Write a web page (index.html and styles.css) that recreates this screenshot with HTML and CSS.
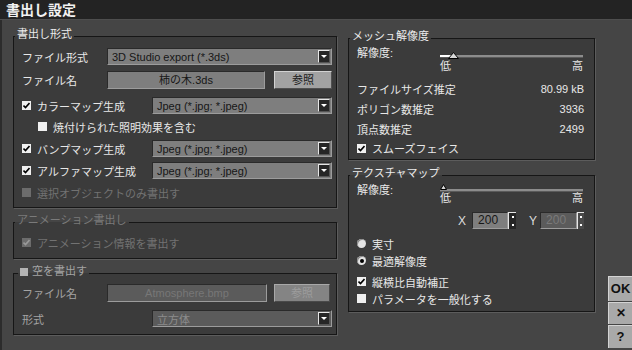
FILE: index.html
```html
<!DOCTYPE html>
<html lang="ja">
<head>
    <meta charset="UTF-8">
    <title>書出し設定</title>
    <link rel="stylesheet" href="styles.css">
</head>
<body>
<div class="window">
    <div class="titlebar">書出し設定</div>
    <div class="main">
        <!-- 左側 -->
        <div class="col-left">
            <fieldset class="group g-format">
                <legend>書出し形式</legend>
                <div class="row r1">
                    <span class="label">ファイル形式</span>
                    <div class="select wide"><span>3D Studio export (*.3ds)</span><i class="arrow"></i></div>
                </div>
                <div class="row r2">
                    <span class="label">ファイル名</span>
                    <div class="field">柿の木.3ds</div>
                    <div class="btn">参照</div>
                </div>
                <div class="row r3">
                    <span class="check"><i class="box on"><svg width="7" height="7" viewBox="0 0 7 7"><polyline points="0.5,3.5 2.5,5.5 6.5,1" fill="none" stroke="#000" stroke-width="1.6"/></svg></i>カラーマップ生成</span>
                    <div class="select short"><span>Jpeg (*.jpg; *.jpeg)</span><i class="arrow"></i></div>
                </div>
                <div class="row r4">
                    <span class="check sub"><i class="box"></i>焼付けられた照明効果を含む</span>
                </div>
                <div class="row">
                    <span class="check"><i class="box on"><svg width="7" height="7" viewBox="0 0 7 7"><polyline points="0.5,3.5 2.5,5.5 6.5,1" fill="none" stroke="#000" stroke-width="1.6"/></svg></i>バンプマップ生成</span>
                    <div class="select short"><span>Jpeg (*.jpg; *.jpeg)</span><i class="arrow"></i></div>
                </div>
                <div class="row">
                    <span class="check"><i class="box on"><svg width="7" height="7" viewBox="0 0 7 7"><polyline points="0.5,3.5 2.5,5.5 6.5,1" fill="none" stroke="#000" stroke-width="1.6"/></svg></i>アルファマップ生成</span>
                    <div class="select short"><span>Jpeg (*.jpg; *.jpeg)</span><i class="arrow"></i></div>
                </div>
                <div class="row">
                    <span class="check dis"><i class="box"></i>選択オブジェクトのみ書出す</span>
                </div>
            </fieldset>

            <fieldset class="group g-anim dis">
                <legend>アニメーション書出し</legend>
                <div class="row">
                    <span class="check dis"><i class="box"><svg width="7" height="7" viewBox="0 0 7 7"><polyline points="0.5,3.5 2.5,5.5 6.5,1" fill="none" stroke="#9a9a9a" stroke-width="1.6"/></svg></i>アニメーション情報を書出す</span>
                </div>
            </fieldset>

            <fieldset class="group g-sky">
                <legend><span class="check dim"><i class="box"></i>空を書出す</span></legend>
                <div class="row">
                    <span class="label dim">ファイル名</span>
                    <div class="field off">Atmosphere.bmp</div>
                    <div class="btn off">参照</div>
                </div>
                <div class="row r-form">
                    <span class="label dim">形式</span>
                    <div class="select short off"><span>立方体</span><i class="arrow"></i></div>
                </div>
            </fieldset>
        </div>

        <!-- 右側 -->
        <div class="col-right">
            <fieldset class="group g-mesh">
                <legend>メッシュ解像度</legend>
                <div class="slider-row">
                    <span class="s-label">解像度:</span>
                    <div class="slider">
                        <div class="track"><i class="fill"></i>
                            <svg class="thumb" width="11" height="7" viewBox="0 0 11 7"><polygon points="5.5,0.5 10.5,6.5 0.5,6.5" fill="#d8d8d8" stroke="#000" stroke-width="1"/></svg>
                        </div>
                        <div class="ends"><span>低</span><span>高</span></div>
                    </div>
                </div>
                <div class="info first"><span>ファイルサイズ推定</span><span>80.99 kB</span></div>
                <div class="info"><span>ポリゴン数推定</span><span>3936</span></div>
                <div class="info"><span>頂点数推定</span><span>2499</span></div>
                <div class="row r-smooth">
                    <span class="check"><i class="box on"><svg width="7" height="7" viewBox="0 0 7 7"><polyline points="0.5,3.5 2.5,5.5 6.5,1" fill="none" stroke="#000" stroke-width="1.6"/></svg></i>スムーズフェイス</span>
                </div>
            </fieldset>

            <fieldset class="group g-tex">
                <legend>テクスチャマップ</legend>
                <div class="slider-row tex">
                    <span class="s-label">解像度:</span>
                    <div class="slider">
                        <div class="track">
                            <svg class="thumb" width="7" height="6" viewBox="0 0 7 6"><polygon points="3.5,0.5 6.5,5.5 0.5,5.5" fill="#d8d8d8" stroke="#000" stroke-width="1"/></svg>
                        </div>
                        <div class="ends"><span>低</span><span>高</span></div>
                    </div>
                </div>
                <div class="xy">
                    <span class="xy-label">X</span>
                    <div class="num">200</div>
                    <div class="spin"><i></i><i></i></div>
                    <span class="xy-label y">Y</span>
                    <div class="num off">200</div>
                    <div class="spin off"><i></i><i></i></div>
                </div>
                <div class="row r-radio">
                    <span class="radio"><i class="dot"></i>実寸</span>
                </div>
                <div class="row">
                    <span class="radio"><i class="dot sel"></i>最適解像度</span>
                </div>
                <div class="row r-aspect">
                    <span class="check"><i class="box on"><svg width="7" height="7" viewBox="0 0 7 7"><polyline points="0.5,3.5 2.5,5.5 6.5,1" fill="none" stroke="#000" stroke-width="1.6"/></svg></i>縦横比自動補正</span>
                </div>
                <div class="row">
                    <span class="check"><i class="box"></i>パラメータを一般化する</span>
                </div>
            </fieldset>
        </div>

        <!-- OK / キャンセル / ヘルプ -->
        <div class="side">
            <div class="side-btn ok">OK</div>
            <div class="side-btn cancel">✕</div>
            <div class="side-btn help">?</div>
        </div>
    </div>
</div>
</body>
</html>
```

FILE: styles.css
```css
*{
    box-sizing: border-box;
}
body{
    margin: 0;
    background: #444;
    font-family: "Liberation Sans", "Noto Sans CJK JP", sans-serif;
    font-size: 11px;
    color: #e8e8e8;
}
.window{
    width: 632px;
    height: 350px;
    overflow: hidden;
    background: #454545;
    box-shadow: inset 2px 0 0 #2c2c2c;
}
/* タイトルバー */
.titlebar{
    height: 20px;
    padding-left: 6px;
    background: #232323;
    border-bottom: 1px solid #4e4e4e;
    font-family: "Noto Sans CJK JP", sans-serif;
    font-size: 14px;
    font-weight: bold;
    line-height: 19px;
    color: #f2f2f2;
}
.main{
    display: flex;
    height: 330px;
    padding: 8px 0 0 13px;
}
.col-left{
    width: 324px;
    display: flex;
    flex-direction: column;
}
.col-right{
    width: 248px;
    margin-left: 11px;
    padding-top: 2px;
}
/* グループ枠 */
.group{
    margin: 0;
    padding: 0 4px 6px 8px;
    border: 1px solid #161616;
    background: #3b3b3b;
    box-shadow: 1px 1px 0 #5c5c5c;
}
.group legend{
    margin-left: -7px;
    padding: 0 2px 4px;
    line-height: 13px;
    color: #ececec;
}
.g-anim{
    margin-top: 6px;
    padding-bottom: 7px;
}
.g-anim legend{
    color: #7a7a7a;
}
.g-anim .row{
    margin-top: 3px;
}
.g-sky{
    margin-top: 6px;
    padding-bottom: 7px;
}
.g-sky legend{
    margin-left: -4px;
}
.g-sky .row{
    height: 18px;
    margin-top: 2px;
}
.g-sky .r-form{
    height: 17px;
    margin-top: 8px;
}
/* 行 */
.row{
    display: flex;
    align-items: center;
    height: 17px;
    margin-top: 5px;
}
.g-format .r1{
    margin-top: 3px;
}
.g-format .r2{
    height: 18px;
    margin-top: 6px;
}
.g-format .r3{
    margin-top: 8px;
}
.g-format .r4{
    margin-top: 4px;
}
.label{
    width: 85px;
    flex-shrink: 0;
}
.dim{
    color: #a4a4a4;
}
/* ドロップダウン */
.select{
    display: flex;
    align-items: center;
    height: 17px;
    padding-left: 4px;
    background: #7e7e7e;
    border: 1px solid;
    border-color: #2a2a2a #9c9c9c #9c9c9c #2a2a2a;
    color: #161616;
}
.select span{
    flex: 1;
}
.wide{
    width: 225px;
}
.short{
    width: 180px;
    margin-left: auto;
}
.arrow{
    width: 12px;
    height: 13px;
    margin-right: 1px;
    background: #262626;
    border: 1px solid;
    border-color: #e6e6e6 #555 #555 #e6e6e6;
    display: flex;
    align-items: center;
    justify-content: center;
}
.arrow::after{
    content: "";
    border-top: 3px solid #fff;
    border-left: 3px solid transparent;
    border-right: 3px solid transparent;
}
.select.off{
    background: #5b5b5b;
    color: #8c8c8c;
}
/* 入力欄とボタン */
.field{
    width: 158px;
    height: 18px;
    background: #7e7e7e;
    border: 1px solid;
    border-color: #2a2a2a #9c9c9c #9c9c9c #2a2a2a;
    color: #161616;
    text-align: center;
    line-height: 16px;
}
.field.off{
    width: 160px;
    background: #5b5b5b;
    color: #777;
}
.btn{
    width: 58px;
    height: 18px;
    margin-left: 9px;
    background: #a2a2a2;
    border: 1px solid;
    border-color: #d2d2d2 #505050 #505050 #d2d2d2;
    color: #202020;
    text-align: center;
    line-height: 16px;
}
.btn.off{
    width: 56px;
    margin-left: 7px;
    background: #848484;
    border-color: #a8a8a8 #4a4a4a #4a4a4a #a8a8a8;
    color: #9c9c9c;
}
/* チェックボックス */
.check{
    display: flex;
    align-items: center;
    white-space: nowrap;
}
.box{
    width: 9px;
    height: 9px;
    margin-right: 6px;
    background: #f0f0f0;
    display: flex;
    align-items: center;
    justify-content: center;
}
.check.sub{
    padding-left: 16px;
}
.check.dis{
    color: #727272;
}
.check.dis .box{
    background: #6c6c6c;
}
.check.dim .box{
    width: 8px;
    height: 8px;
    margin-right: 4px;
    background: #b4b4b4;
}
/* ラジオボタン */
.radio{
    display: flex;
    align-items: center;
}
.dot{
    width: 9px;
    height: 9px;
    margin-right: 6px;
    border-radius: 50%;
    background: #e4e4e4;
    box-shadow: inset 1px 1px 0 #8a8a8a;
    display: flex;
    align-items: center;
    justify-content: center;
}
.dot.sel::after{
    content: "";
    width: 4px;
    height: 4px;
    border-radius: 50%;
    background: #000;
}
/* 右側 */
.g-mesh,
.g-tex{
    padding: 0 10px 2px 8px;
}
.g-tex{
    margin-top: 7px;
    padding-bottom: 4px;
}
.slider-row{
    display: flex;
    height: 24px;
}
.s-label{
    width: 83px;
    line-height: 13px;
}
.slider{
    width: 143px;
    padding-top: 8px;
}
.track{
    position: relative;
    height: 3px;
    background: #8c8c8c;
    border-bottom: 1px solid #5a5a5a;
}
.fill{
    display: block;
    width: 12px;
    height: 2px;
    background: #fff;
}
.thumb{
    position: absolute;
    left: 8px;
    top: -3px;
}
.ends{
    display: flex;
    justify-content: space-between;
    margin-top: 2px;
    line-height: 13px;
}
.tex .slider{
    padding-top: 5px;
}
.tex .thumb{
    left: 0;
    top: -5px;
}
.tex .ends{
    margin-top: 0;
}
.info{
    display: flex;
    justify-content: space-between;
    align-items: center;
    height: 20px;
}
.info.first{
    margin-top: 8px;
}
.g-mesh .r-smooth{
    height: 18px;
    margin-top: 0;
}
/* X Y 入力 */
.xy{
    display: flex;
    align-items: center;
    justify-content: flex-end;
    height: 17px;
    margin-top: 4px;
}
.xy-label{
    margin-right: 6px;
    color: #dcdcdc;
    font-size: 12px;
}
.xy-label.y{
    margin-left: 13px;
    margin-right: 3px;
}
.num{
    width: 36px;
    height: 17px;
    padding-left: 5px;
    background: #7e7e7e;
    border: 1px solid;
    border-color: #2a2a2a #9c9c9c #9c9c9c #2a2a2a;
    color: #161616;
    font-size: 12px;
    line-height: 15px;
}
.num.off{
    width: 37px;
    background: #5b5b5b;
    color: #7a7a7a;
}
.spin{
    width: 8px;
    height: 17px;
    background: #262626;
    border-left: 1px solid #e6e6e6;
    border-top: 1px solid #e6e6e6;
    display: flex;
    flex-direction: column;
    justify-content: space-around;
    align-items: center;
}
.spin i{
    width: 2px;
    height: 2px;
    background: #fff;
}
.spin.off{
    width: 7px;
    background: #4a4a4a;
}
.g-tex .row{
    margin-top: 0;
}
.g-tex .r-radio{
    margin-top: 6px;
}
.g-tex .r-aspect{
    margin-top: 4px;
}
/* 右下のボタン */
.side{
    width: 24px;
    margin-left: 13px;
    margin-bottom: 2px;
    align-self: flex-end;
    display: flex;
    flex-direction: column;
    gap: 1px;
}
.side-btn{
    background: #a9a9a9;
    border-top: 1px solid #d4d4d4;
    border-left: 1px solid #d4d4d4;
    color: #111;
    font-family: "Liberation Sans", sans-serif;
    font-weight: bold;
    font-size: 13px;
    text-align: center;
}
.ok{
    height: 25px;
    line-height: 24px;
}
.cancel{
    height: 22px;
    line-height: 21px;
    font-size: 12px;
}
.help{
    height: 23px;
    line-height: 22px;
}
```
